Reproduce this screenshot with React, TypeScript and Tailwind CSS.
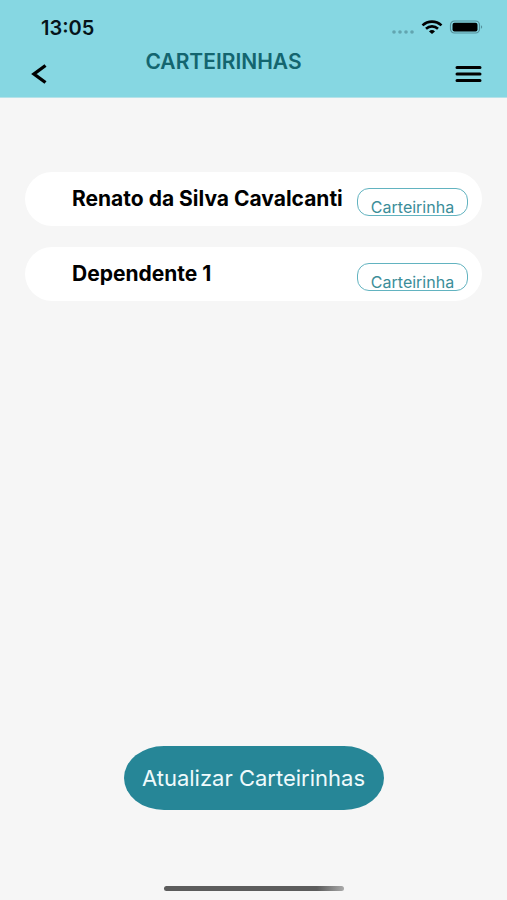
const MEMBERS = [
  { id: 1, name: 'Renato da Silva Cavalcanti' },
  { id: 2, name: 'Dependente 1' },
];

function StatusBar() {
  return (
    <div className="flex h-12 items-center justify-between pt-2 pr-6 pl-[41px]">
      <span className="text-[20px] leading-5 font-semibold text-[#06141a]">13:05</span>
      <div className="flex items-center">
        <svg width="24" height="16" viewBox="0 0 24 16" fill="#62a5b0" aria-hidden="true">
          <circle cx="3" cy="12" r="1.8" />
          <circle cx="9" cy="12" r="1.8" />
          <circle cx="15" cy="12" r="1.8" />
          <circle cx="21" cy="12" r="1.8" />
        </svg>
        <svg className="ml-1.5" width="22" height="16" viewBox="0 0 22 16" fill="none" stroke="#000" aria-hidden="true">
          <path d="M1.5 5.4C7 .4 15 .4 20.5 5.4" strokeWidth="2.6" />
          <path d="M5 8.8C8.5 5.6 13.5 5.6 17 8.8" strokeWidth="2.6" />
          <path d="M8 11.4C9.8 9.6 12.2 9.6 14 11.4L11 14Z" fill="#000" stroke="none" />
        </svg>
        <svg className="ml-1.5" width="34" height="16" viewBox="0 0 34 16" aria-hidden="true">
          <rect x="1.5" y="1" width="29" height="12" rx="4" fill="none" stroke="#55919c" strokeWidth="1.2" />
          <rect x="3.5" y="2.8" width="25" height="8.6" rx="2" fill="#000" />
          <path d="M32 5.2C33.6 5.8 33.6 8.2 32 8.8Z" fill="#55919c" />
        </svg>
      </div>
    </div>
  );
}

function Header() {
  return (
    <header className="border-b border-[#b5e2e9] bg-[#86d7e2]">
      <StatusBar />
      <div className="flex h-[49px] items-start justify-between pr-[25px] pl-[31px]">
        <button type="button" aria-label="Voltar" className="mt-4">
          <svg width="17" height="20" viewBox="0 0 17 20" fill="none" stroke="#000" strokeWidth="3.4">
            <path d="M14.5 1.5L3 10L14.5 18.5" />
          </svg>
        </button>
        <h1 className="mr-14 text-[21px] leading-7 font-semibold text-[#13656f]">CARTEIRINHAS</h1>
        <button type="button" aria-label="Menu" className="mt-4">
          <svg width="27" height="20" viewBox="0 0 27 20" fill="none" stroke="#000" strokeWidth="3" strokeLinecap="round">
            <path d="M2 3.5H25M2 10H25M2 16.5H25" />
          </svg>
        </button>
      </div>
    </header>
  );
}

function MemberCard({ name }: { name: string }) {
  return (
    <li className="flex h-[54px] items-start justify-between rounded-[28px] bg-white pr-3.5 pl-[47px]">
      <span className="pt-[13px] text-[21px] leading-7 font-bold whitespace-nowrap text-black">{name}</span>
      <button
        type="button"
        className="mt-4 h-7 w-[111px] shrink-0 rounded-xl border border-[#62b3c0] pt-2 text-[16px] leading-5 text-[#3b8d99]"
      >
        Carteirinha
      </button>
    </li>
  );
}

export default function App() {
  return (
    <div className="flex min-h-screen flex-col bg-[#f6f6f6] font-['Inter','Liberation_Sans',sans-serif]">
      <Header />
      <main className="flex flex-1 flex-col">
        <ul className="mx-[25px] mt-[74px] flex flex-col gap-[21px]">
          {MEMBERS.map(m => <MemberCard key={m.id} name={m.name} />)}
        </ul>
        <button
          type="button"
          className="mx-auto mt-auto h-16 w-[260px] rounded-[40px/32px] bg-[#268697] text-[22px] leading-6 text-[#effafc]"
        >
          Atualizar Carteirinhas
        </button>
      </main>
      <footer className="flex justify-center pt-19 pb-[9px]">
        <div className="h-[5px] w-[180px] rounded-full bg-linear-to-r from-[#5c5c5c] from-85% to-[#aaaaaa]" />
      </footer>
    </div>
  );
}
